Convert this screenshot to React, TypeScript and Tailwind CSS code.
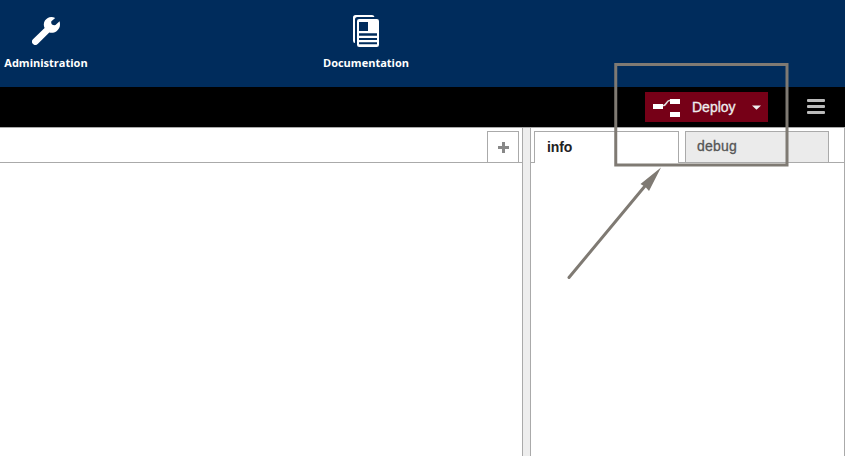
import React from 'react';

function WrenchIcon() {
  return (
    <svg className="block h-7 w-[28px]" viewBox="0 0 28 28" fill="white">
      <path d="M23.200 1Q21.200 0 19.500 0A7.600 7.600 0 0 0 12.600 11L1 22.300A3.300 3.300 0 0 0 5.700 27L17.300 15.400A8.300 8.300 0 0 0 28 7.700Q28 6 27.600 4.300L23.500 8Q21.500 8.500 20 7.400 18.800 6 19.400 4.300Z" />
    </svg>
  );
}

function DocumentsIcon() {
  return (
    <svg className="block h-8 w-[26px]" viewBox="0 0 26 32">
      <path d="M2.500 0H19q2 0 2.500 2H4.500Q2 2 2 4.500V28Q0 28 0 25.500V2.500Q0 0 2.500 0Z" fill="white" />
      <rect x="4" y="4" width="22" height="28" rx="2.200" fill="white" />
      <path d="M6 7h9v9H6ZM6 18.300h18v2.500H6ZM6 23h18v2H6ZM6 27.300h18v2H6Z" fill="#002c5c" />
    </svg>
  );
}

function DeployIcon() {
  return (
    <svg className="block h-[20px] w-[28px]" viewBox="0 0 28 20">
      <path d="M9 8.500h1.500c3 0 3-5 6-5h1.500" fill="none" stroke="#ddd" strokeWidth="1.500" />
      <path d="M0 7h10v5H0ZM17 2h10v5H17ZM17 15h10v5H17Z" fill="white" />
    </svg>
  );
}

export default function App() {
  return (
    <div className="relative flex h-[456px] w-[845px] flex-col overflow-hidden bg-white font-['Liberation_Sans',Arial,sans-serif]">
      <header className="flex h-[87px] shrink-0 bg-[#002c5c] font-['Open_Sans',sans-serif] text-[11px] font-bold leading-4 text-white">
        <div className="ml-1 flex w-[84px] shrink-0 flex-col items-center pt-[17px]">
          <WrenchIcon />
          <span className="mt-[10px] whitespace-nowrap">Administration</span>
        </div>
        <div className="ml-[236px] flex w-[84px] shrink-0 flex-col items-center pt-[15px]">
          <DocumentsIcon />
          <span className="mt-2 whitespace-nowrap">Documentation</span>
        </div>
      </header>
      <div className="flex h-[40px] shrink-0 items-start bg-black pt-[5px]">
        <button className="ml-[645px] flex h-[30px] w-[123px] items-center bg-[#760017] pl-2 text-[14px] text-[#eee]">
          <DeployIcon />
          <span className="ml-[11px] w-[45px] text-left [-webkit-text-stroke:0.3px_#eee]">Deploy</span>
          <svg className="ml-[15px] h-[5px] w-[9px]" viewBox="0 0 9 5"><path d="M0 .5h9L4.500 4.800Z" fill="#eee" /></svg>
        </button>
        <div className="ml-[39px] mt-[7px] flex w-[18px] flex-col gap-[3px]">
          <div className="h-[3px] rounded-[1px] bg-[#bbb]" />
          <div className="h-[3px] rounded-[1px] bg-[#bbb]" />
          <div className="h-[3px] rounded-[1px] bg-[#bbb]" />
        </div>
      </div>
      <main className="flex min-h-0 flex-1">
        <section className="w-[523px] border-r border-t border-[#aaa]">
          <div className="flex h-[35px] justify-end border-b border-[#aaa] pr-[3px] pt-[3px]">
            <div className="flex w-8 items-center justify-center border-x border-t border-[#aaa]">
              <svg className="h-[11px] w-[11px]" viewBox="0 0 11 11"><path d="M4 0h3v4h4v3H7v4H4V7H0V4h4Z" fill="#888" /></svg>
            </div>
          </div>
        </section>
        <div className="w-[7px] border-t border-[#aaa] bg-[#eee]" />
        <section className="w-[315px] border-x border-t border-[#aaa]">
          <div className="flex h-[35px] border-b border-[#aaa] pl-[3px] pt-[3px] text-[14px]">
            <div className="-mb-px flex w-[145px] items-center border-x border-t border-[#aaa] bg-white pl-3 font-bold text-[#222]"><span className="tracking-[-0.15px]">info</span></div>
            <div className="ml-[6px] flex w-[144px] items-center border-x border-t border-[#aaa] bg-[#ebebeb] pl-[11px] text-[#555]"><span className="-mt-px tracking-[0.2px] [-webkit-text-stroke:0.3px_#555]">debug</span></div>
          </div>
        </section>
      </main>
      <svg className="pointer-events-none absolute inset-0 h-full w-full" viewBox="0 0 845 456">
        <rect x="615.75" y="64.5" width="171.25" height="100.500" fill="none" stroke="#7f7a73" strokeWidth="3" />
        <path d="M569 277.500L645 186" stroke="#7f7a73" strokeWidth="3" strokeLinecap="round" />
        <path d="M661 167.500L640.500 184 645.500 187 649 191Z" fill="#7f7a73" />
      </svg>
    </div>
  );
}
